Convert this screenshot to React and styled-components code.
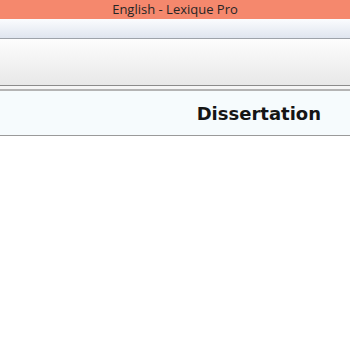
import React from "react";
import styled, { createGlobalStyle } from "styled-components";

const Global = createGlobalStyle`
  html, body { margin: 0; padding: 0; background: #ffffff; }
  body { width: 350px; height: 350px; overflow: hidden; }
`;

const Window = styled.div`
  display: flex;
  flex-direction: column;
  width: 350px;
  height: 350px;
  background: #ffffff;
`;

const TitleBar = styled.div`
  height: 19px;
  background: #f5886d;
  display: flex;
  align-items: center;
  justify-content: center;
  font-family: "Open Sans", "Noto Sans", sans-serif;
  font-size: 13px;
  color: #262626;
  line-height: 19px;
`;

const MenuBar = styled.div`
  height: 19px;
  background: linear-gradient(#fbfcfe, #dfe5ef);
  border-bottom: 1px solid #9ea3aa;
`;

const Toolbar = styled.div`
  height: 46px;
  background: linear-gradient(#fdfdfd, #e8e8e8);
  border-bottom: 1px solid #8c8c8c;
`;

const Gap = styled.div`
  height: 3px;
  background: #f6f6f6;
  border-bottom: 2px solid #b4b4b4;
`;

const Header = styled.div`
  height: 44px;
  background: #f6fbfd;
  border-bottom: 1px solid #9a9a9a;
  display: flex;
  align-items: center;
  justify-content: flex-end;
  padding-right: 29px;
  font-family: "DejaVu Sans", sans-serif;
  font-weight: bold;
  font-size: 18px;
  color: #151515;
`;

const Body = styled.div`
  flex: 1;
  background: #ffffff;
`;

export default function App() {
  return (
    <Window>
      <Global />
      <TitleBar>English - Lexique Pro</TitleBar>
      <MenuBar />
      <Toolbar />
      <Gap />
      <Header>Dissertation</Header>
      <Body />
    </Window>
  );
}
